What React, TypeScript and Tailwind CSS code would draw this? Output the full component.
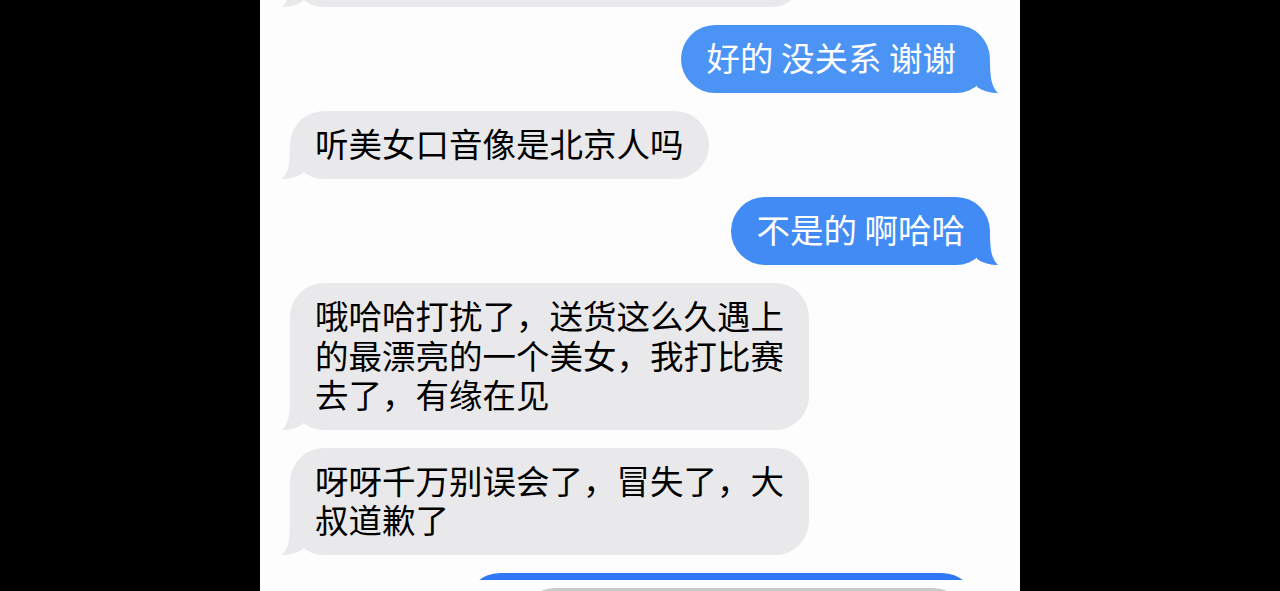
import React from "react";

type Msg = {
  id: number;
  fromMe: boolean;
  lines: string[];
  bg: string;
  extraPad?: boolean;
};

const messages: Msg[] = [
  { id: 1, fromMe: true, lines: ["好的 没关系 谢谢"], bg: "bg-[#4b94f5]", extraPad: true },
  { id: 2, fromMe: false, lines: ["听美女口音像是北京人吗"], bg: "bg-[#e9e9eb]" },
  { id: 3, fromMe: true, lines: ["不是的 啊哈哈"], bg: "bg-[#428bf4]" },
  {
    id: 4,
    fromMe: false,
    lines: ["哦哈哈打扰了，送货这么久遇上", "的最漂亮的一个美女，我打比赛", "去了，有缘在见"],
    bg: "bg-[#e9e9eb]",
  },
  {
    id: 5,
    fromMe: false,
    lines: ["呀呀千万别误会了，冒失了，大", "叔道歉了"],
    bg: "bg-[#e9e9eb]",
  },
];

// 气泡尾巴 (左边是灰色, 右边镜像)
function Tail({ fromMe, color }: { fromMe: boolean; color: string }) {
  return (
    <svg
      width="22"
      height="34"
      viewBox="0 0 22 34"
      className={
        fromMe
          ? "absolute -right-[8px] bottom-0 -scale-x-100"
          : "absolute -left-[8px] bottom-0"
      }
    >
      <path d="M8 2 C8 20 6 28 0 34 C8 34 15 32 21 28 L21 2 Z" fill={color} />
    </svg>
  );
}

function Bubble({ msg }: { msg: Msg }) {
  const tailColor = msg.fromMe
    ? msg.id === 1
      ? "#4b94f5"
      : "#428bf4"
    : "#e9e9eb";

  return (
    <div className={msg.fromMe ? "flex justify-end" : "flex justify-start"}>
      <div
        className={`relative min-h-[68px] rounded-[34px] pt-[12px] pb-[16px] pl-[25px] ${
          msg.extraPad ? "pr-[34px]" : "pr-[25px]"
        } ${msg.bg} ${msg.fromMe ? "text-white" : "text-black"}`}
      >
        <Tail fromMe={msg.fromMe} color={tailColor} />
        <div className="relative text-[33.5px] leading-[39.5px] whitespace-pre">
          {msg.lines.map((l, i) => (
            <div key={i}>{l}</div>
          ))}
        </div>
      </div>
    </div>
  );
}

export default function App() {
  return (
    <div
      className="flex h-[591px] w-full justify-center overflow-hidden bg-black"
      style={{ fontFamily: '"Noto Sans CJK SC", "Noto Sans", sans-serif' }}
    >
      <div className="flex w-[760px] flex-col bg-[#fdfdfd] px-[30px]">
        {/* 上面被截掉的灰色气泡 */}
        <div className="-mt-[61px] mb-[18px] flex justify-start">
          <div className="relative h-[68px] w-[515px] rounded-[34px] bg-[#e9e9eb]">
            <Tail fromMe={false} color="#e9e9eb" />
          </div>
        </div>

        <div className="flex flex-col gap-[18px]">
          {messages.map((m) => (
            <Bubble key={m.id} msg={m} />
          ))}
        </div>

        {/* 底部露出的一条 */}
        <div className="mt-[18px] flex shrink-0 justify-end pr-[14px]">
          <div className="h-[7px] w-[510px] overflow-hidden">
            <div className="h-[68px] rounded-[34px] bg-[#2f77f5]" />
          </div>
        </div>
        <div className="mt-[8px] flex shrink-0 justify-end pr-[23px]">
          <div className="h-[10px] w-[446px] overflow-hidden">
            <div className="h-[68px] rounded-[34px] bg-[#c9c9c9]" />
          </div>
        </div>
      </div>
    </div>
  );
}
